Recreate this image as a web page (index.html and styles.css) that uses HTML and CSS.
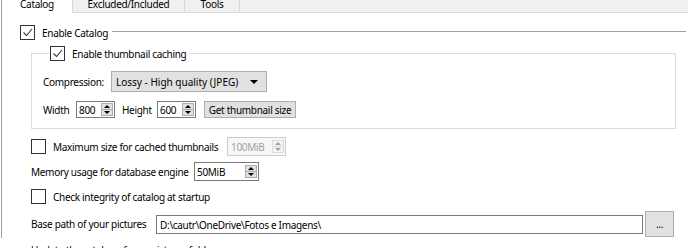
FILE: index.html
```html
<!DOCTYPE html>
<html lang="en">
<head>
  <meta charset="UTF-8">
  <title>Catalog settings</title>
  <link rel="stylesheet" href="styles.css">
</head>
<body>

  <div class="win">
    <div class="tabs">
      <div class="tab active">Catalog</div>
      <div class="tab tab-excl">Excluded/Included</div>
      <div class="tab tab-tools">Tools</div>
      <div class="tab-rest"></div>
    </div>

    <div class="pane">
      <div class="section-head">
        <label class="check">
          <span class="box"><svg width="13" height="13" viewBox="0 0 13 13"><path d="M2.5 6.5 L5.5 9.5 L11 3" fill="none" stroke="#333" stroke-width="1.1"/></svg></span>
          Enable Catalog
        </label>
        <span class="rule"></span>
      </div>

      <fieldset class="group">
        <legend>
          <label class="check">
            <span class="box"><svg width="13" height="13" viewBox="0 0 13 13"><path d="M2.5 6.5 L5.5 9.5 L11 3" fill="none" stroke="#333" stroke-width="1.1"/></svg></span>
            Enable thumbnail caching
          </label>
        </legend>

        <div class="row row-compress">
          <span class="lbl lbl-compress">Compression:</span>
          <div class="combo">
            <span>Lossy - High quality (JPEG)</span>
            <span class="arrow"></span>
          </div>
        </div>

        <div class="row row-size">
          <span class="lbl lbl-width">Width</span>
          <div class="spin spin-small">
            <span class="val">800</span>
            <span class="spin-btns"><span class="up"></span><span class="down"></span></span>
          </div>
          <span class="lbl lbl-height">Height</span>
          <div class="spin spin-small">
            <span class="val">600</span>
            <span class="spin-btns"><span class="up"></span><span class="down"></span></span>
          </div>
          <button class="btn btn-thumb">Get thumbnail size</button>
        </div>
      </fieldset>

      <div class="row row-max">
        <label class="check check-max">
          <span class="box"></span>
          Maximum size for cached thumbnails
        </label>
        <div class="spin spin-max disabled">
          <span class="val">100MiB</span>
          <span class="spin-btns"><span class="up"></span><span class="down"></span></span>
        </div>
      </div>

      <div class="row row-mem">
        <span class="lbl lbl-mem">Memory usage for database engine</span>
        <div class="spin spin-mem">
          <span class="val">50MiB</span>
          <span class="spin-btns"><span class="up"></span><span class="down"></span></span>
        </div>
      </div>

      <div class="row row-integrity">
        <label class="check">
          <span class="box"></span>
          Check integrity of catalog at startup
        </label>
      </div>

      <div class="row row-path">
        <span class="lbl lbl-path">Base path of your pictures</span>
        <div class="field">D:\cautr\OneDrive\Fotos e Imagens\</div>
        <button class="btn btn-browse">...</button>
      </div>

      <div class="row row-next">
        <span class="lbl">Update the catalog of your pictures folder</span>
      </div>
    </div>
  </div>

</body>
</html>
```

FILE: styles.css
```css
body {
  margin: 0;
  background-color: #fff;
  font-family: "Noto Sans", Arial, sans-serif;
  font-size: 10px;
  letter-spacing: -0.3px;
  color: #000;
  overflow: hidden;
  height: 248px;
  white-space: nowrap;
}
.win {
  margin-left: 1px;
  border-left: 1px solid #a0a0a0;
  height: 248px;
}
.tabs {
  display: flex;
  height: 22px;
  margin-top: -10px;
  background-color: #f0f0f0;
  border-bottom: 1px solid #d9d9d9;
}
.tab {
  box-sizing: border-box;
  border: 1px solid #d9d9d9;
  border-bottom: none;
  border-left: none;
  padding-top: 6px;
  text-align: center;
}
.tab.active {
  background-color: #fff;
  width: 71px;
  margin-bottom: -1px;
}
.tab-excl {
  width: 112px;
}
.tab-tools {
  width: 55px;
}
.tab-rest {
  flex: 1;
}
.pane {
  display: flex;
  flex-direction: column;
}
.check {
  display: flex;
  align-items: center;
  gap: 7px;
}
.box {
  box-sizing: border-box;
  flex-shrink: 0;
  width: 15px;
  height: 15px;
  border: 1px solid #333;
  background-color: #fff;
  display: flex;
  align-items: center;
  justify-content: center;
}
.section-head {
  display: flex;
  align-items: center;
  margin: 12px 2px 0 18px;
  height: 15px;
}
.rule {
  flex: 1;
  height: 1px;
  background-color: #a0a0a0;
  margin-left: 4px;
  margin-top: -3px;
}
.group {
  margin: 6px 12px 0 29px;
  padding: 0 0 10px 11px;
  border: 1px solid #dcdcdc;
  min-width: 0;
}
.group legend {
  padding: 0 3px 0 1px;
  margin-left: 6px;
}
.row {
  display: flex;
  align-items: center;
}
.row-compress {
  margin-top: 10px;
  height: 21px;
}
.lbl {
  flex-shrink: 0;
}
.lbl-compress {
  width: 68px;
}
.combo {
  box-sizing: border-box;
  width: 156px;
  height: 21px;
  background-color: #e1e1e1;
  border: 1px solid #adadad;
  display: flex;
  align-items: center;
  justify-content: space-between;
  padding: 0 8px 0 4px;
  letter-spacing: 0;
}
.arrow {
  width: 0;
  height: 0;
  border-left: 4px solid transparent;
  border-right: 4px solid transparent;
  border-top: 4px solid #000;
}
.row-size {
  margin-top: 9px;
  height: 17px;
}
.lbl-width {
  width: 33px;
}
.lbl-height {
  margin-left: 7px;
  width: 35px;
}
.spin {
  box-sizing: border-box;
  flex-shrink: 0;
  height: 17px;
  border: 1px solid #7a7a7a;
  background-color: #fff;
  display: flex;
  align-items: center;
  justify-content: space-between;
  padding: 0 1px 0 2px;
}
.spin .val {
  flex: 1;
  overflow: hidden;
}
.spin-small {
  width: 39px;
}
.spin-btns {
  display: flex;
  flex-direction: column;
  flex-shrink: 0;
  width: 12px;
  height: 13px;
}
.spin-btns span {
  flex: 1;
  box-sizing: border-box;
  border: 1px solid #adadad;
  background-color: #e1e1e1;
  position: relative;
}
.spin-btns .down {
  border-top: none;
}
.spin-btns .up::after,
.spin-btns .down::after {
  content: "";
  position: absolute;
  left: 2px;
  top: 1px;
  border-left: 3px solid transparent;
  border-right: 3px solid transparent;
}
.spin-btns .up::after {
  border-bottom: 3px solid #000;
}
.spin-btns .down::after {
  top: 1px;
  border-top: 3px solid #000;
}
.btn {
  box-sizing: border-box;
  flex-shrink: 0;
  font-family: inherit;
  font-size: 10px;
  letter-spacing: -0.3px;
  background-color: #e1e1e1;
  border: 1px solid #adadad;
  border-radius: 0;
  color: #000;
  padding: 0;
}
.btn-thumb {
  margin-left: 8px;
  width: 92px;
  height: 17px;
}
.row-max {
  margin: 8px 0 0 29px;
  height: 19px;
}
.check-max {
  width: 196px;
}
.spin-max {
  width: 59px;
  height: 19px;
  padding-left: 3px;
}
.spin.disabled {
  border-color: #cccccc;
  color: #a0a0a0;
  background-color: #f7f7f7;
}
.spin.disabled .spin-btns span {
  background-color: #f4f4f4;
  border-color: #dadada;
}
.spin.disabled .up::after {
  border-bottom-color: #a0a0a0;
}
.spin.disabled .down::after {
  border-top-color: #a0a0a0;
}
.row-mem {
  margin: 6px 0 0 29px;
  height: 19px;
}
.lbl-mem {
  width: 163px;
}
.spin-mem {
  width: 65px;
  height: 19px;
}
.row-integrity {
  margin: 8px 0 0 29px;
  height: 15px;
}
.row-path {
  margin: 7px 0 0 29px;
  height: 26px;
}
.lbl-path {
  width: 125px;
}
.field {
  box-sizing: border-box;
  flex-shrink: 0;
  width: 487px;
  height: 19px;
  border: 1px solid #7a7a7a;
  padding: 2px 3px;
}
.btn-browse {
  margin-left: 2px;
  width: 29px;
  height: 26px;
}
.row-next {
  margin: 6px 0 0 29px;
}
```
